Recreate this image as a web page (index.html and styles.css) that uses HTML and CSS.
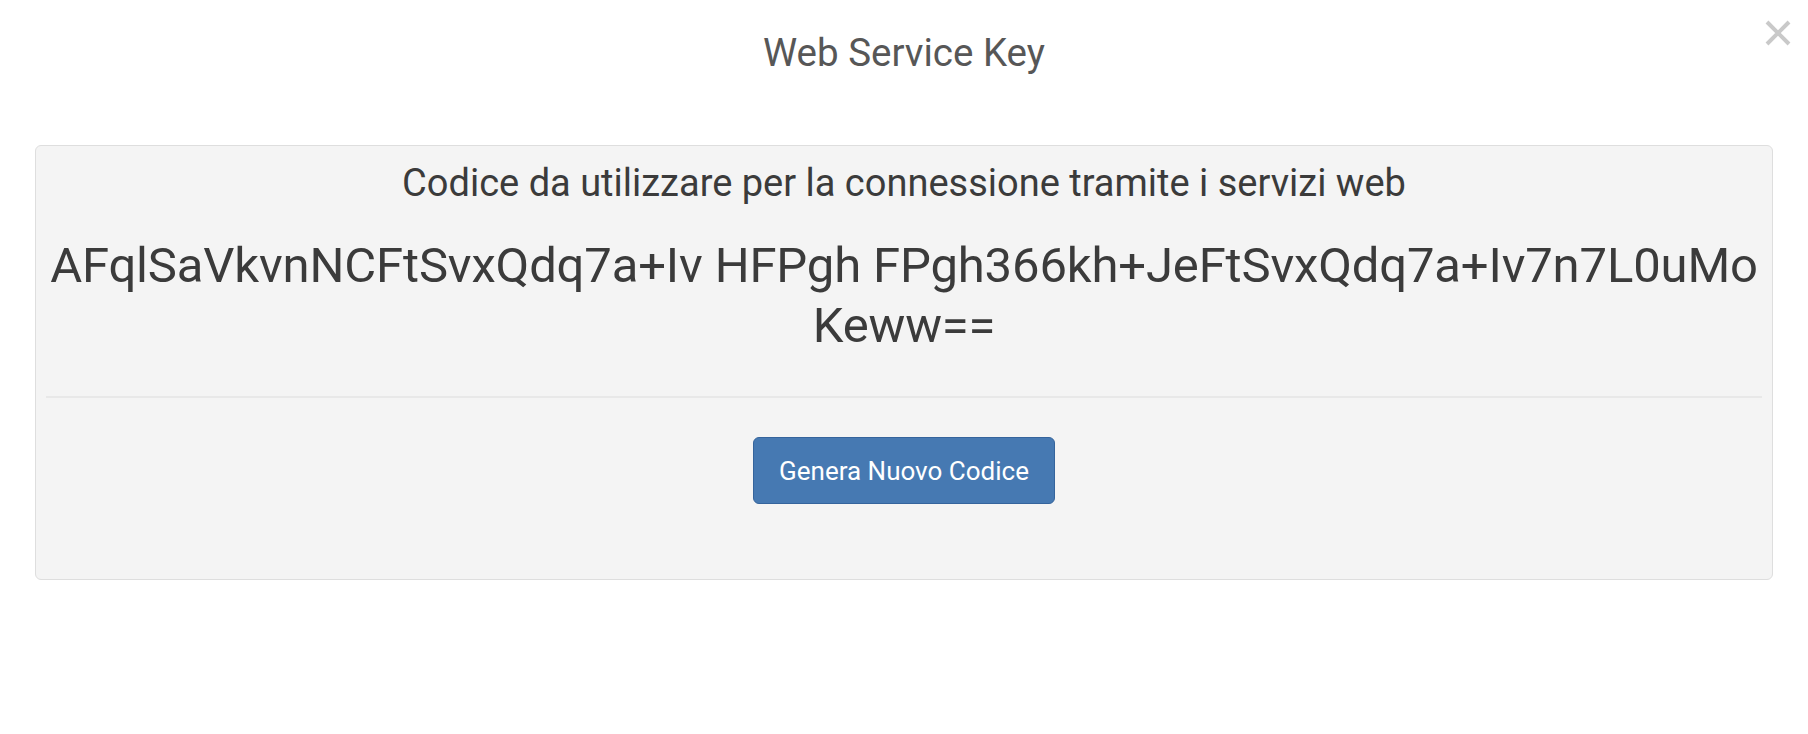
FILE: index.html
```html
<!DOCTYPE html>
<html lang="it">
<head>
    <meta charset="UTF-8">
    <title>Web Service Key</title>
    <link rel="stylesheet" href="styles.css">
</head>
<body>
    <div class="modal">
        <div class="modal-header">
            <h4 class="modal-title">Web Service Key</h4>
            <button class="close" type="button" aria-label="Chiudi">
                <svg width="26" height="26" viewBox="0 0 26 26">
                    <path d="M2 2 L24 24 M24 2 L2 24" stroke="#c9c9c9" stroke-width="4" fill="none"/>
                </svg>
            </button>
        </div>
        <div class="modal-body">
            <div class="well">
                <p class="hint">Codice da utilizzare per la connessione tramite i servizi web</p>
                <p class="key">AFqlSaVkvnNCFtSvxQdq7a+Iv HFPgh FPgh366kh+JeFtSvxQdq7a+Iv7n7L0uMo<br>Keww==</p>
                <div class="divider"></div>
                <div class="actions">
                    <button class="btn-primary" type="button">Genera Nuovo Codice</button>
                </div>
            </div>
        </div>
    </div>
</body>
</html>
```

FILE: styles.css
```css
body {
    margin: 0;
    background-color: #fff;
    font-family: Roboto, "Open Sans", sans-serif;
    color: #3b3b3b;
}
.modal {
    position: relative;
    width: 1808px;
    height: 734px;
}
.modal-header {
    padding: 33px 0 0;
    height: 112px;
    box-sizing: border-box;
}
.modal-title {
    margin: 0;
    text-align: center;
    font-size: 38.5px;
    line-height: 40px;
    font-weight: normal;
    color: #575757;
}
.close {
    position: absolute;
    top: 20px;
    right: 17px;
    padding: 0;
    border: none;
    background: none;
    cursor: pointer;
}
.close svg {
    display: block;
}
.modal-body {
    padding: 33px 35px 0;
}
.well {
    background-color: #f4f4f4;
    border: 1px solid #dedede;
    border-radius: 6px;
    padding: 17px 10px 75px;
    text-align: center;
}
.hint {
    margin: 0;
    font-size: 38px;
    line-height: 40px;
}
.key {
    margin: 33px 0 0;
    font-size: 49px;
    line-height: 60px;
    letter-spacing: -0.15px;
    white-space: nowrap;
}
.divider {
    height: 2px;
    background-color: #e8e8e8;
    margin-top: 40px;
}
.actions {
    margin-top: 39px;
}
.btn-primary {
    width: 302px;
    height: 67px;
    background-color: #4679b2;
    border: 1px solid #35649c;
    border-radius: 6px;
    color: #fff;
    font-family: inherit;
    font-size: 26px;
    cursor: pointer;
}
```
